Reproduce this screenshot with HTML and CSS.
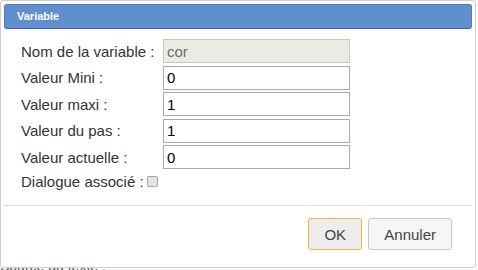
FILE: index.html
```html
<!DOCTYPE html>
<html lang="fr">
<head>
    <meta charset="UTF-8">
    <meta name="viewport" content="width=device-width, initial-scale=1.0">
    <title>Variable</title>
    <link rel="stylesheet" href="styles.css">
</head>
<body>
    <div class="page">
        <p class="page-line">Source du texte :</p>
    </div>

    <div class="dialog">
        <div class="titlebar">Variable</div>

        <div class="content">
            <label for="nom">Nom de la variable :</label>
            <input id="nom" type="text" value="cor" disabled>

            <label for="mini">Valeur Mini :</label>
            <input id="mini" type="text" value="0">

            <label for="maxi">Valeur maxi :</label>
            <input id="maxi" type="text" value="1">

            <label for="pas">Valeur du pas :</label>
            <input id="pas" type="text" value="1">

            <label for="actuelle">Valeur actuelle :</label>
            <input id="actuelle" type="text" value="0">

            <div class="check-row">
                <span>Dialogue associé :</span>
                <span class="checkbox"></span>
            </div>
        </div>

        <div class="buttonpane">
            <button class="btn btn-focus">OK</button>
            <button class="btn">Annuler</button>
        </div>
    </div>
</body>
</html>
```

FILE: styles.css
```css
body, html {
    margin: 0;
    padding: 0;
    font-family: 'Liberation Sans', Arial, sans-serif;
    background: #fff;
    overflow: hidden;
}

/* page behind the dialog */
.page {
    padding-top: 258px;
}

.page-line {
    margin: 0;
    font-size: 14px;
    color: #555;
}

/* Dialog window */
.dialog {
    position: absolute;
    top: 0;
    left: 0;
    width: 476px;
    height: 268px;
    box-sizing: border-box;
    border: 1px solid #cfcfcf;
    border-radius: 3px;
    padding: 3px;
    background: #fff;
    display: flex;
    flex-direction: column;
}

.titlebar {
    height: 25px;
    box-sizing: border-box;
    line-height: 23px;
    padding: 0 12px;
    background: #618fce;
    border: 1px solid #4a7cc6;
    border-bottom-color: #3566b5;
    border-radius: 3px;
    color: #fff;
    font-size: 11px;
    font-weight: bold;
}

.content {
    display: grid;
    grid-template-columns: 142px 187px;
    row-gap: 2.5px;
    align-items: center;
    padding: 10px 0 0 17px;
    height: 176px;
    box-sizing: border-box;
    align-content: start;
    font-size: 15px;
    color: #333;
}

.content input {
    height: 24px;
    box-sizing: border-box;
    border: 1px solid #a9a9a9;
    padding: 1px 3px;
    font-family: inherit;
    font-size: 15px;
    color: #000;
    margin: 0;
}

.content input:disabled {
    background: #ebebe4;
    border-color: #c8c8c8;
    color: #6d6d6d;
}

.check-row {
    grid-column: 1 / 3;
    display: flex;
    align-items: center;
    gap: 3px;
    height: 20px;
}

.checkbox {
    width: 9px;
    height: 9px;
    border: 1px solid #a6a6a6;
    border-radius: 2px;
    background: #e4e4e4;
}

/* Buttons */
.buttonpane {
    border-top: 1px solid #dddddd;
    display: flex;
    justify-content: flex-end;
    gap: 6px;
    padding: 12px 20px 0 0;
}

.btn {
    height: 32px;
    box-sizing: border-box;
    border: 1px solid #c5c5c5;
    border-radius: 3px;
    background: #f6f6f6;
    color: #454545;
    font-family: inherit;
    font-size: 15px;
    padding: 0 15px;
    cursor: pointer;
}

.btn-focus {
    width: 54px;
    background: #ededed;
    border-color: #f0b43e;
}
```
